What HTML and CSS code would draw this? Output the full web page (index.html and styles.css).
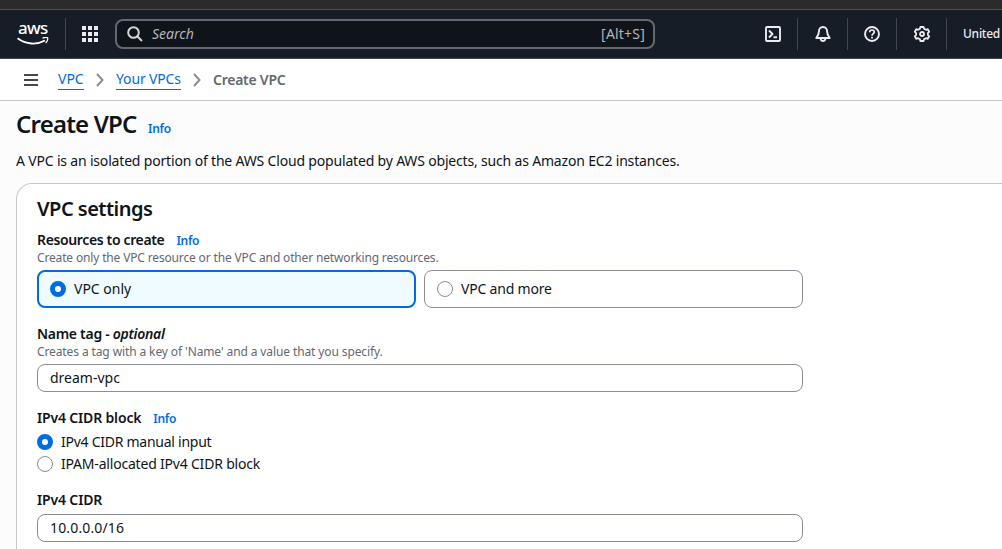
FILE: index.html
```html
<!DOCTYPE html>
<html lang="en">
<head>
<meta charset="utf-8">
<title>Create VPC</title>
<link rel="stylesheet" href="styles.css">
</head>
<body>
<div class="strip"></div>
<header class="topnav">
  <div class="logo">
    <span class="logo-text">aws</span>
    <svg class="logo-smile" width="32" height="9" viewBox="0 0 32 9" fill="none" stroke="#fff"><path d="M.5 1.300C9 7.800 20 8 28 3.500" stroke-width="1.900"/><path d="M25.500 1C28 .3 30 .2 30.600 .9C31 2 30.200 4.300 28.700 6" stroke-width="1.300"/></svg>
  </div>
  <svg class="apps" width="16" height="16" viewBox="0 0 16 16" fill="#ebebf0"><path d="M0 0h4v4H0zM6 0h4v4H6zM12 0h4v4h-4zM0 6h4v4H0zM6 6h4v4H6zM12 6h4v4h-4zM0 12h4v4H0zM6 12h4v4H6zM12 12h4v4h-4z"/></svg>
  <div class="search">
    <svg width="16" height="16" viewBox="0 0 16 16" fill="none" stroke="#d5d5dc" stroke-width="2"><circle cx="6.500" cy="6.500" r="5.300"/><path d="M10.500 10.500l4.500 4.500"/></svg>
    <span class="placeholder">Search</span>
    <span class="shortcut">[Alt+S]</span>
  </div>
  <div class="tools">
    <div class="tool"><svg width="16" height="16" viewBox="0 0 16 16" fill="none" stroke="#ebebf0" stroke-width="1.900" stroke-linejoin="round"><rect x="1" y="1" width="14" height="14" rx="1"/><path d="M4 4.500L7.500 8 4 11.500M8.500 11.200H12"/></svg></div>
    <div class="tool"><svg width="16" height="16" viewBox="0 0 16 16" fill="none" stroke="#ebebf0" stroke-width="1.900" stroke-linejoin="round"><path d="M8 1C5.200 1 4 3 4 5C4 8.500 3 9.800 1.300 12H14.700C13 9.800 12 8.500 12 5C12 3 10.800 1 8 1Z"/><path d="M5.600 12.500C5.900 15.800 10.100 15.800 10.400 12.500"/></svg></div>
    <div class="tool"><svg width="16" height="16" viewBox="0 0 16 16" fill="none" stroke="#ebebf0" stroke-width="1.900"><circle cx="8" cy="8" r="7"/><path d="M5.700 6.300C5.700 3.300 10.300 3.300 10.300 6.100C10.300 7.700 8 7.600 8 9.800M8 10.700V12.500" stroke-width="1.700"/></svg></div>
    <div class="tool"><svg width="16" height="16" viewBox="0 0 16 16" fill="none" stroke="#ebebf0" stroke-width="1.800" stroke-linejoin="round"><path d="M6.400 1H9.600L10.200 2.900L12 3.800L13.800 3.200L15.200 5.700L13.900 7.100V8.900L15.200 10.300L13.800 12.800L12 12.200L10.200 13.100L9.600 15H6.400L5.800 13.100L4 12.200L2.200 12.800L.8 10.300L2.100 8.900V7.100L.8 5.700L2.200 3.200L4 3.800L5.800 2.900Z"/><circle cx="8" cy="8" r="2"/></svg></div>
    <div class="region">United</div>
  </div>
</header>
<nav class="crumbs">
  <svg class="menu" width="14" height="12" viewBox="0 0 14 12" fill="#424650"><path d="M0 0h14v2H0zM0 5h14v2H0zM0 10h14v2H0z"/></svg>
  <a class="crumb crumb-vpc">VPC</a>
  <svg class="chevron" width="8" height="14" viewBox="0 0 8 14" fill="none" stroke="#8c8c94" stroke-width="2"><path d="M1 1l5.500 6L1 13"/></svg>
  <a class="crumb crumb-list">Your VPCs</a>
  <svg class="chevron" width="8" height="14" viewBox="0 0 8 14" fill="none" stroke="#8c8c94" stroke-width="2"><path d="M1 1l5.500 6L1 13"/></svg>
  <span class="current">Create VPC</span>
</nav>
<main class="page">
  <div class="heading"><h1 class="title">Create VPC</h1><a class="info">Info</a></div>
  <p class="lead">A VPC is an isolated portion of the AWS Cloud populated by AWS objects, such as Amazon EC2 instances.</p>
  <section class="panel">
    <h2 class="panel-title">VPC settings</h2>
    <div class="field">
      <div class="label"><span class="t-resources">Resources to create</span><a class="info">Info</a></div>
      <div class="hint hint-resources">Create only the VPC resource or the VPC and other networking resources.</div>
      <div class="tiles">
        <label class="tile selected"><span class="radio on"></span><span>VPC only</span></label>
        <label class="tile"><span class="radio"></span><span class="t-more">VPC and more</span></label>
      </div>
    </div>
    <div class="field">
      <div class="label"><span class="t-name">Name tag - <i>optional</i></span></div>
      <div class="hint hint-name">Creates a tag with a key of 'Name' and a value that you specify.</div>
      <div class="input">dream-vpc</div>
    </div>
    <div class="field">
      <div class="label"><span class="t-block">IPv4 CIDR block</span><a class="info">Info</a></div>
      <div class="options">
        <label class="option"><span class="radio on"></span><span class="t-manual">IPv4 CIDR manual input</span></label>
        <label class="option"><span class="radio"></span><span class="t-ipam">IPAM-allocated IPv4 CIDR block</span></label>
      </div>
    </div>
    <div class="field">
      <div class="label"><span class="t-cidr">IPv4 CIDR</span></div>
      <div class="input cidr">10.0.0.0/16</div>
    </div>
  </section>
</main>
</body>
</html>
```
FILE: styles.css
```css
* { box-sizing: border-box; }
body { margin: 0; height: 549px; overflow: hidden; background: #fcfcfd; color: #0f141a; font: 14px/20px "Noto Sans", "Open Sans", sans-serif; }
svg { display: block; flex: none; }
h1, h2, p { margin: 0; }
.strip { height: 10px; background: #2b2b2b; border-bottom: 1px solid #505050; }
.topnav { height: 49px; background: #161d26; border-bottom: 1px solid #424650; display: flex; align-items: center; white-space: nowrap; }
.logo { flex: none; width: 66px; height: 32px; padding: 2px 0 0 17px; border-right: 1px solid #424650; }
.logo-text { display: block; height: 17px; color: #fff; font-size: 17px; line-height: 16px; font-weight: 500; letter-spacing: -0.7px; padding-left: 1px; }
.apps { margin-left: 16px; }
.search { flex: none; width: 540px; height: 30px; margin-left: 17px; padding: 0 8px 0 10px; display: flex; align-items: center; border: 2px solid #656871; border-radius: 8px; background: #0f141a; color: #b4b4bb; }
.placeholder { margin-left: 9px; font-style: italic; }
.shortcut { margin-left: auto; letter-spacing: 0.2px; }
.tools { flex: none; display: flex; align-items: center; margin-left: 93px; color: #ebebf0; }
.tool { width: 50px; height: 32px; display: flex; align-items: center; justify-content: center; border-right: 1px solid #424650; }
.tool:nth-child(3) { width: 49px; }
.region { margin-left: 16px; width: 39px; font-size: 12px; font-weight: 500; letter-spacing: -0.25px; }
.crumbs { height: 42px; padding-left: 24px; background: #fff; border-bottom: 1px solid #c6c6cd; display: flex; align-items: center; white-space: nowrap; }
.crumb { height: 20px; margin-top: 1px; line-height: 18px; color: #006ce0; border-bottom: 1px solid #006ce0; }
.crumb-vpc { width: 26px; margin-left: 20px; }
.crumb-list { width: 65px; margin-left: 12px; letter-spacing: -0.15px; }
.chevron { margin-left: 12px; }
.current { margin-left: 12px; color: #656871; font-weight: 600; letter-spacing: -0.25px; }
.page { height: 448px; overflow: hidden; padding: 8px 0 0 16px; white-space: nowrap; }
.heading { display: flex; align-items: baseline; height: 30px; }
.title { font-size: 24px; line-height: 29px; font-weight: 600; width: 132px; letter-spacing: -0.8px; }
.info { color: #006ce0; font-size: 12px; line-height: 16px; font-weight: 600; letter-spacing: -0.3px; }
.lead { margin-top: 12px; letter-spacing: -0.178px; }
.panel { margin-top: 12px; height: 366px; padding: 13px 20px 0; border: 1px solid #c6c6cd; border-width: 1px 0 0 1px; border-radius: 16px 0 0 0; background: #fff; }
.panel-title { font-size: 20px; line-height: 24px; font-weight: 600; margin-bottom: 9px; letter-spacing: -0.52px; }
.field { width: 766px; margin-bottom: 16px; }
.field:last-child { margin-bottom: 0; }
.label { display: flex; align-items: baseline; gap: 12px; height: 20px; font-weight: 600; }
.hint { height: 20px; color: #656871; font-size: 12px; line-height: 16px; }
.hint-resources { letter-spacing: -0.155px; }
.hint-name { letter-spacing: -0.11px; }
.t-resources { letter-spacing: -0.36px; }
.t-name { letter-spacing: -0.29px; }
.t-block { letter-spacing: -0.16px; }
.t-cidr { letter-spacing: -0.15px; }
.t-manual { letter-spacing: -0.26px; }
.t-ipam { letter-spacing: -0.2px; }
.t-more { letter-spacing: -0.2px; }
.tiles { display: grid; grid-template-columns: 379px 379px; gap: 8px; }
.tile { height: 38px; padding: 0 12px; border: 1px solid #8c8c94; border-radius: 8px; display: flex; align-items: center; gap: 8px; }
.tile.selected { border: 2px solid #006ce0; padding: 0 11px; background: #f0fbff; }
.radio { flex: none; width: 16px; height: 16px; border: 1px solid #8c8c94; border-radius: 50%; background: #fff; }
.radio.on { border: 5px solid #006ce0; }
.input { height: 28px; padding: 0 12px; border: 1px solid #8c8c94; border-radius: 8px; line-height: 26px; }
.options { margin-top: 4px; display: grid; gap: 2px; }
.option { display: flex; align-items: center; gap: 8px; height: 20px; }
.cidr { margin-top: 4px; letter-spacing: 0.15px; }
```
